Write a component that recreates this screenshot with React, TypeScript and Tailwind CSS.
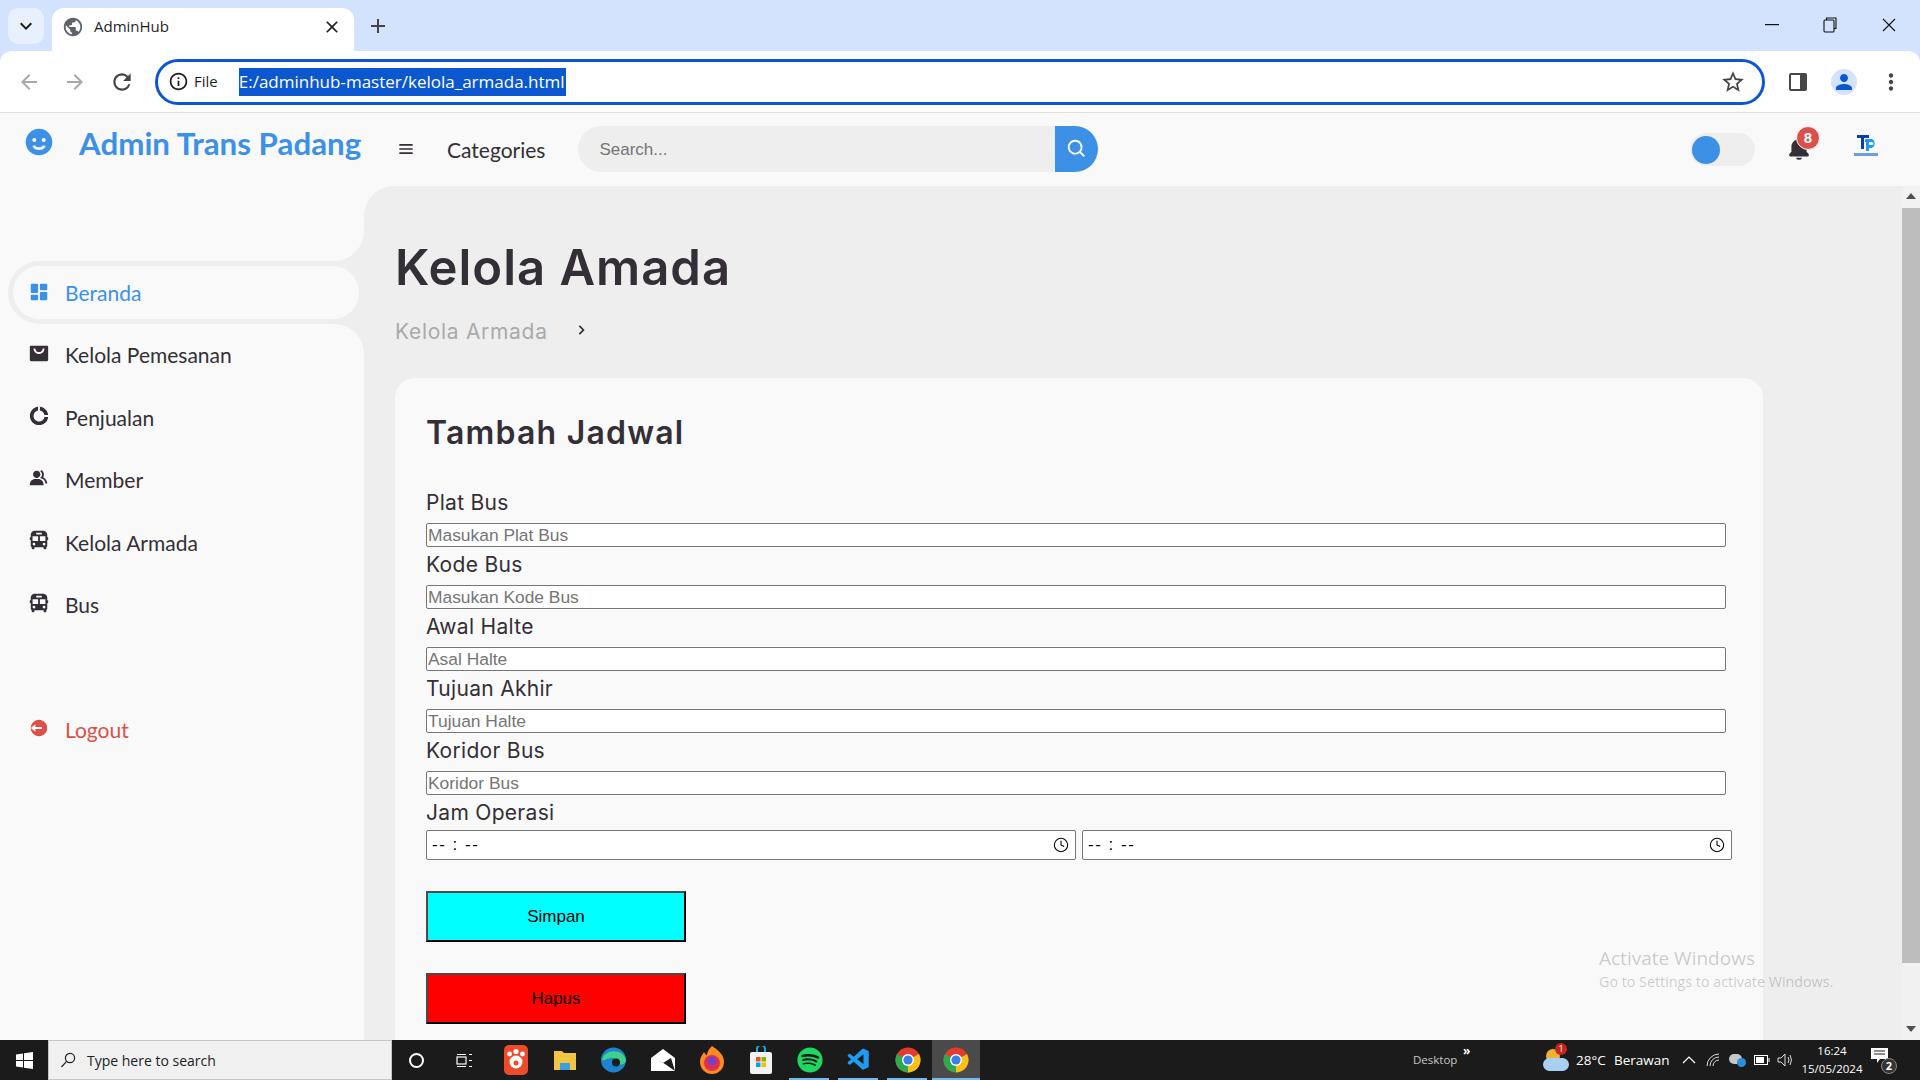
import { BiChevronRight, BiMenu, BiSearch, BiSolidBell, BiSolidBus, BiSolidDashboard, BiSolidDoughnutChart, BiSolidGroup, BiSolidLogOutCircle, BiSolidShoppingBagAlt, BiSolidSmile } from "react-icons/bi";
import { MdAdd, MdArrowBack, MdArrowForward, MdClose, MdInfoOutline, MdKeyboardArrowDown, MdMoreVert, MdPerson, MdPublic, MdRefresh, MdStarBorder } from "react-icons/md";
import { FaSpotify } from "react-icons/fa";
import { VscVscode } from "react-icons/vsc";
import { Clock } from "lucide-react";

const NAV_ITEMS = [
  { label: "Kelola Pemesanan", icon: BiSolidShoppingBagAlt },
  { label: "Penjualan", icon: BiSolidDoughnutChart },
  { label: "Member", icon: BiSolidGroup },
  { label: "Kelola Armada", icon: BiSolidBus },
  { label: "Bus", icon: BiSolidBus },
];

const FIELDS = [
  { label: "Plat Bus", placeholder: "Masukan Plat Bus" },
  { label: "Kode Bus", placeholder: "Masukan Kode Bus" },
  { label: "Awal Halte", placeholder: "Asal Halte" },
  { label: "Tujuan Akhir", placeholder: "Tujuan Halte" },
  { label: "Koridor Bus", placeholder: "Koridor Bus" },
];

function ChromeLogo() {
  return (
    <svg width="26" height="26" viewBox="0 0 26 26">
      <circle cx="13" cy="13" r="12.5" fill="#e33b2e" />
      <path d="M13 13 L24 7 A12.5 12.5 0 0 1 13 25.5 Z" fill="#fbc116" />
      <path d="M13 13 L13 25.5 A12.5 12.5 0 0 1 2 7 Z" fill="#2fa84f" />
      <circle cx="13" cy="13" r="6" fill="#fff" />
      <circle cx="13" cy="13" r="4.6" fill="#3a7fe6" />
    </svg>
  );
}

function BrowserBar() {
  return (
    <>
      <div className="h-[52px] bg-[#d3e3fd] flex items-start shrink-0 text-[#1f1f1f]">
        <div className="ml-2 mt-2 w-9 h-9 rounded-[10px] bg-[#e9f0fd] flex items-center justify-center">
          <MdKeyboardArrowDown size={24} />
        </div>
        <div className="ml-2 mt-2 w-[302px] h-11 bg-white rounded-t-xl flex items-center pl-[10px] pr-3 pb-[7px]">
          <MdPublic size={22} className="text-[#5f6368]" />
          <span className="ml-[10px] text-[15px] font-['Open_Sans',sans-serif] flex-1">AdminHub</span>
          <MdClose size={20} />
        </div>
        <div className="ml-3 mt-[14px] text-[#444]">
          <MdAdd size={24} />
        </div>
        <div className="ml-auto flex items-center h-[50px]">
          <svg width="14" height="2" viewBox="0 0 14 2"><rect width="14" height="1.2" fill="#111" /></svg>
          <svg className="ml-11" width="14" height="16" viewBox="0 0 14 16" fill="none" stroke="#111" strokeWidth="1.1">
            <rect x="1" y="3" width="10" height="12" rx="1" />
            <path d="M3.5 3 V1 H13 V11.5 H11" />
          </svg>
          <svg className="ml-[45px] mr-6" width="14" height="14" viewBox="0 0 14 14" stroke="#111" strokeWidth="1.1"><path d="M1 1 L13 13 M13 1 L1 13" /></svg>
        </div>
      </div>
      <div className="h-[62px] bg-white border-b border-[#e0e0e0] shrink-0 flex items-center rounded-t-xl -mt-px relative">
        <MdArrowBack size={24} className="ml-[17px] text-[#a8a8a8]" />
        <MdArrowForward size={24} className="ml-[22px] text-[#a8a8a8]" />
        <MdRefresh size={26} className="ml-[22px] text-[#444]" />
        <div className="ml-[20px] w-[1610px] h-[46px] border-[3px] border-[#0b57d0] rounded-full flex items-center pl-[10px] font-['Open_Sans',sans-serif]">
          <MdInfoOutline size={21} className="text-[#1f1f1f]" />
          <span className="ml-[5px] text-[15px] text-[#1f1f1f] font-medium">File</span>
          <span className="ml-[21px] h-7 w-[327px] bg-[#0b57d0] text-white text-[17px] leading-7 whitespace-nowrap">E:/adminhub-master/kelola_armada.html</span>
          <MdStarBorder size={26} className="ml-auto mr-[16px] text-[#444]" />
        </div>
        <svg className="ml-[23px]" width="20" height="20" viewBox="0 0 20 20">
          <rect x="1" y="1" width="18" height="18" rx="2" fill="#474747" />
          <rect x="3" y="3" width="9" height="14" fill="#fff" />
        </svg>
        <div className="ml-[23px] w-[26px] h-[26px] rounded-full bg-[#d3e3fd] flex items-center justify-center text-[#0b57d0]">
          <MdPerson size={24} />
        </div>
        <MdMoreVert size={26} className="ml-[21px] text-[#444]" />
      </div>
    </>
  );
}

function TopNav() {
  return (
    <div className="h-[73px] shrink-0 flex items-start bg-[#f9f9f9]">
      <BiSolidSmile size={32} className="ml-[23px] mt-[13px] text-[#3c91e6]" />
      <span className="ml-[24px] mt-[8px] w-[288px] font-['Lato',sans-serif] font-bold text-[31.3px] leading-[44px] text-[#3c91e6] whitespace-nowrap">Admin Trans Padang</span>
      <BiMenu size={20} className="ml-[29px] mt-[26px] text-[#342e37]" />
      <span className="ml-[31px] mt-[21px] font-['Lato',sans-serif] text-[21px] leading-[32px] text-[#342e37]">Categories</span>
      <div className="ml-[33px] mt-[13px] flex">
        <div className="w-[477px] h-[46px] bg-[#eeeeee] rounded-l-full flex items-center pl-[21px] pt-[1px] font-['Liberation_Sans',sans-serif] text-[17px] text-[#757575]">Search...</div>
        <div className="w-[43px] h-[46px] bg-[#3c91e6] rounded-r-full flex items-center justify-center text-white">
          <BiSearch size={22} />
        </div>
      </div>
      <div className="ml-auto mt-5 w-[65px] h-[33px] rounded-full bg-[#eeeeee] flex items-center pl-[2px]">
        <div className="w-7 h-7 rounded-full bg-[#3c91e6]" />
      </div>
      <div className="ml-[31px] mt-[23px] relative text-[#342e37]">
        <BiSolidBell size={26} />
        <span className="absolute -top-[10px] left-[10px] w-6 h-6 rounded-full bg-[#db504a] border border-[#f9f9f9] text-white text-[15px] font-bold font-['Liberation_Sans',sans-serif] flex items-center justify-center">8</span>
      </div>
      <svg className="ml-[42px] mr-[42px] mt-[21px]" width="24" height="24" viewBox="0 0 24 24">
        <rect x="3" y="1" width="12" height="3" fill="#0b3fa8" />
        <rect x="7" y="1" width="3" height="14" fill="#0b3fa8" />
        <path d="M11 5 H18 A5 5 0 0 1 18 14 H15 V17 H12 V8 H11 Z M15 8 V11 H18 A1.5 1.5 0 0 0 18 8 Z" fill="#1e9bf0" fillRule="evenodd" />
        <rect x="0" y="19" width="24" height="3" fill="#6f9fd8" />
      </svg>
    </div>
  );
}

function Sidebar() {
  return (
    <div className="w-[364px] shrink-0 flex flex-col bg-[#eeeeee] font-['Lato',sans-serif] text-[21px] text-[#342e37]">
      <div className="h-[75px] bg-[#f9f9f9] rounded-br-[30px]" />
      <div className="h-[63px] bg-[#f9f9f9] pl-2">
        <div className="h-full bg-[#eeeeee] rounded-l-full p-[5px]">
          <div className="h-full bg-[#f9f9f9] rounded-full flex items-center pl-[15px] text-[#3c91e6]">
            <BiSolidDashboard size={22} className="-mt-[2px]" />
            <span className="ml-[15px]">Beranda</span>
          </div>
        </div>
      </div>
      <div className="flex-1 bg-[#f9f9f9] rounded-tr-[30px]">
        {NAV_ITEMS.map((item) => (
          <div key={item.label} className="h-[62.4px] flex items-center pl-[28px]">
            <item.icon size={22} className="-mt-1" />
            <span className="ml-[15px]">{item.label}</span>
          </div>
        ))}
        <div className="mt-[63px] h-[62px] flex items-center pl-[28px] text-[#db504a]">
          <BiSolidLogOutCircle size={22} className="-mt-1" />
          <span className="ml-[15px]">Logout</span>
        </div>
      </div>
    </div>
  );
}

function TimeField() {
  return (
    <div className="w-[650px] h-[30px] bg-white border border-[#767676] rounded-[2px] flex items-center pl-[5px] pr-[6px] font-['Liberation_Sans',sans-serif] text-[17px] text-black">
      <span className="tracking-[1.5px] whitespace-pre">-- : --</span>
      <Clock size={16} strokeWidth={1.6} className="ml-auto" />
    </div>
  );
}

function Content() {
  return (
    <div className="flex-1 min-w-0 h-full flex overflow-hidden">
      <div className="flex-1 min-w-0 bg-[#eeeeee] rounded-tl-[30px] pl-[31px] overflow-hidden font-['Inter',sans-serif] text-[#342e37]">
        <h1 className="mt-[53px] text-[49px] leading-[58px] font-semibold tracking-[1px]">Kelola Amada</h1>
        <div className="mt-[21px] flex items-center h-7 text-[#aaaaaa] text-[21px] tracking-[0.7px]">
          <span className="w-[176px]">Kelola Armada</span>
          <BiChevronRight size={20} className="text-[#342e37] -mt-1" />
        </div>
        <div className="mt-[32px] w-[1368px] h-[700px] bg-[#f9f9f9] rounded-t-[20px] pl-[31px] pt-[32px]">
          <h2 className="text-[32px] leading-[46px] font-semibold tracking-[1.2px]">Tambah Jadwal</h2>
          <div className="mt-[29px]">
            {FIELDS.map((field) => (
              <div key={field.label} className="h-[62px]">
                <label className="block h-[38px] text-[21px] leading-[36px] tracking-[0.3px]">{field.label}</label>
                <input
                  placeholder={field.placeholder}
                  className="block w-[1300px] h-[24px] bg-white border border-[#767676] rounded-[2px] px-px font-['Liberation_Sans',sans-serif] text-[17.4px] leading-[22px] placeholder:text-[#757575] outline-none"
                />
              </div>
            ))}
          </div>
          <label className="block h-[35px] text-[21px] leading-[36px] tracking-[0.3px]">Jam Operasi</label>
          <div className="flex gap-[6px]">
            <TimeField />
            <TimeField />
          </div>
          <button className="block mt-[31px] w-[260px] h-[51px] bg-[#00ffff] border-2 border-t-[#4a4a4a] border-l-[#4a4a4a] border-r-black border-b-black font-['Liberation_Sans',sans-serif] text-[17px] text-black">Simpan</button>
          <button className="block mt-[31px] w-[260px] h-[51px] bg-[#ff0000] border-2 border-t-[#4a4a4a] border-l-[#4a4a4a] border-r-black border-b-black font-['Liberation_Sans',sans-serif] text-[17px] text-black">Hapus</button>
        </div>
      </div>
      <div className="w-[18px] shrink-0 bg-[#f1f1f1] flex flex-col items-center">
        <svg className="mt-[7px]" width="10" height="6" viewBox="0 0 10 6"><path d="M5 0 L10 6 H0 Z" fill="#505050" /></svg>
        <div className="mt-[9px] w-full h-[755px] bg-[#bdbdbd]" />
        <svg className="mt-[63px]" width="10" height="6" viewBox="0 0 10 6"><path d="M5 6 L10 0 H0 Z" fill="#505050" /></svg>
      </div>
    </div>
  );
}

function Taskbar() {
  return (
    <div className="h-10 shrink-0 bg-[#1b1b1b] flex items-center text-white font-['Open_Sans',sans-serif]">
      <div className="flex items-center shrink-0">
        <div className="w-12 flex justify-center">
          <svg width="17" height="17" viewBox="0 0 17 17" fill="#fff">
            <path d="M0 2.4 L7 1.4 V8 H0 Z M8 1.2 L17 0 V8 H8 Z M0 9 H7 V15.6 L0 14.6 Z M8 9 H17 V17 L8 15.8 Z" />
          </svg>
        </div>
        <div className="w-[344px] h-10 bg-[#f0f0f0] border border-[#c4c4c4] flex items-center pl-[11px] text-[#222] text-[14px]">
          <svg width="16" height="16" viewBox="0 0 16 16" fill="none" stroke="#222" strokeWidth="1.2">
            <circle cx="10" cy="6" r="4.6" />
            <path d="M6.6 9.4 L1.5 15" />
          </svg>
          <span className="ml-[11px]">Type here to search</span>
        </div>
        <div className="w-12 flex justify-center">
          <div className="w-[15px] h-[15px] rounded-full border-2 border-white" />
        </div>
        <div className="w-12 flex justify-center">
          <svg width="17" height="15" viewBox="0 0 17 15" fill="none" stroke="#fff" strokeWidth="1.2">
            <rect x="1" y="4" width="9" height="7" />
            <path d="M1 1.5 H10 M1 13.5 H10 M13 1.5 H16 M13 7.5 H16 M13 13.5 H16" />
          </svg>
        </div>
        <div className="ml-[3px] w-[49px] flex justify-center">
          <svg width="24" height="30" viewBox="0 0 24 30">
            <rect width="24" height="30" rx="5" fill="#ee4b2b" />
            <circle cx="12" cy="17" r="6.5" fill="#fff" />
            <circle cx="5.5" cy="9" r="2.4" fill="#fff" />
            <circle cx="12" cy="6.5" r="2.6" fill="#fff" />
            <circle cx="18.5" cy="9" r="2.4" fill="#fff" />
            <circle cx="12" cy="18" r="2.5" fill="#ee4b2b" />
          </svg>
        </div>
        <div className="w-[49px] flex justify-center">
          <svg width="22" height="22" viewBox="0 0 22 22">
            <path d="M0 2 H8 L10 4 H22 V21 H0 Z" fill="#f4c542" />
            <rect x="6" y="14" width="10" height="7" fill="#3e9fe0" />
          </svg>
        </div>
        <div className="w-[49px] flex justify-center">
          <svg width="25" height="26" viewBox="0 0 25 26">
            <circle cx="12.5" cy="13" r="12.5" fill="#1f84d0" />
            <path d="M1 13 C3 2 22 1 25 13 C25 17 21 18 15 18 C17 13 13 10 9 11 C5 12 3 14 1 13 Z" fill="#3fd08a" />
            <circle cx="15" cy="15.5" r="4" fill="#1b1b1b" />
          </svg>
        </div>
        <div className="w-[49px] flex justify-center">
          <svg width="24" height="22" viewBox="0 0 24 22">
            <path d="M0 9 L12 0 L24 9 V22 H0 Z" fill="#fff" />
            <path d="M4 9 L12 14 L20 9 L24 22 L14 15 Z" fill="#1b1b1b" />
          </svg>
        </div>
        <div className="w-[49px] flex justify-center">
          <svg width="24" height="28" viewBox="0 0 24 28">
            <path d="M12 0 C20 5 24 10 24 16 A12 12 0 0 1 0 16 C0 11 3 8 4 6 C5 8 6 9 7 9 C7 6 9 3 12 0 Z" fill="#ff8a1f" />
            <circle cx="12" cy="17" r="8" fill="#e0304f" />
            <circle cx="12" cy="15" r="4.5" fill="#7a3fc4" />
          </svg>
        </div>
        <div className="w-[49px] flex justify-center">
          <svg width="22" height="28" viewBox="0 0 22 28">
            <path d="M7 7 V3 A4 4 0 0 1 15 3 V7" fill="none" stroke="#2ba7e0" strokeWidth="2" />
            <rect y="6" width="22" height="22" rx="2" fill="#f2f2f2" />
            <rect x="6" y="11" width="4.5" height="4.5" fill="#f25022" />
            <rect x="11.5" y="11" width="4.5" height="4.5" fill="#7fba00" />
            <rect x="6" y="16.5" width="4.5" height="4.5" fill="#00a4ef" />
            <rect x="11.5" y="16.5" width="4.5" height="4.5" fill="#ffb900" />
          </svg>
        </div>
        <div className="w-[49px] h-10 flex justify-center items-center relative">
          <FaSpotify size={26} className="text-[#1ed760]" />
          <span className="absolute bottom-0 left-[4px] right-[5px] h-[2px] bg-[#76b9ed]" />
        </div>
        <div className="w-[49px] h-10 flex justify-center items-center relative">
          <VscVscode size={26} className="text-[#1f9cf0]" />
          <span className="absolute bottom-0 left-[4px] right-[5px] h-[2px] bg-[#76b9ed]" />
        </div>
        <div className="w-[49px] h-10 flex justify-center items-center relative">
          <ChromeLogo />
          <span className="absolute bottom-0 left-[4px] right-[5px] h-[2px] bg-[#76b9ed]" />
        </div>
        <div className="w-[48px] h-10 flex justify-center items-center relative bg-[#4a4a4a]">
          <ChromeLogo />
          <span className="absolute bottom-0 left-0 right-0 h-[2px] bg-[#76b9ed]" />
        </div>
      </div>
      <div className="ml-auto mr-[25px] flex items-center shrink-0">
        <span className="w-[50px] text-[11.5px] text-[#c8c8c8]">Desktop</span>
        <span className="w-[10px] -mt-[18px] text-[12px] font-bold leading-none">»</span>
        <div className="ml-[70px] relative w-[26px] h-[22px]">
          <div className="absolute left-[3px] top-0 w-[14px] h-[14px] rounded-full bg-[#f2b134]" />
          <div className="absolute left-0 bottom-0 w-[26px] h-[13px] rounded-full bg-[#a9d0f2]" />
          <span className="absolute -top-[6px] left-[12px] w-3 h-3 rounded-full bg-[#c4261d] text-[9px] leading-3 text-center">1</span>
        </div>
        <span className="ml-[7px] w-[38px] text-[13.5px] whitespace-nowrap">28°C</span>
        <span className="w-[60px] text-[13.5px] whitespace-nowrap">Berawan</span>
        <svg className="ml-[8px]" width="14" height="8" viewBox="0 0 14 8" fill="none" stroke="#fff" strokeWidth="1.2"><path d="M1 7 L7 1 L13 7" /></svg>
        <svg className="ml-[10px]" width="14" height="14" viewBox="0 0 14 14" fill="none" stroke="#ddd" strokeWidth="1">
          <path d="M1 13 A12 12 0 0 1 13 1 M4 13 A9 9 0 0 1 13 4 M7 13 A6 6 0 0 1 13 7" />
        </svg>
        <div className="ml-[9px] relative w-[17px] h-[14px]">
          <div className="absolute left-0 top-[1px] w-[13px] h-[10px] rounded-full bg-[#c8c8c8]" />
          <div className="absolute right-0 bottom-0 w-[9px] h-[9px] rounded-full bg-[#2a8fe0]" />
        </div>
        <svg className="ml-[8px]" width="16" height="10" viewBox="0 0 16 10" fill="none" stroke="#fff" strokeWidth="1">
          <rect x="0.5" y="0.5" width="13" height="9" />
          <rect x="2" y="2" width="8" height="6" fill="#fff" stroke="none" />
          <path d="M15 3 V7" />
        </svg>
        <svg className="ml-[7px]" width="16" height="14" viewBox="0 0 16 14" fill="none" stroke="#ddd" strokeWidth="1">
          <path d="M1 5 H4 L8 1 V13 L4 9 H1 Z M11 4 Q13 7 11 10 M13 2 Q16 7 13 12" />
        </svg>
        <div className="ml-[3px] w-[72px] flex flex-col items-center text-[11.5px] leading-[18px]">
          <span>16:24</span>
          <span>15/05/2024</span>
        </div>
        <div className="ml-[3px] relative w-[24px] h-[24px]">
          <svg width="17" height="15" viewBox="0 0 17 15">
            <path d="M0 0 H17 V11 H9 L6 15 V11 H0 Z" fill="#fff" />
            <path d="M3 3 H14 M3 6 H14" stroke="#1b1b1b" />
          </svg>
          <span className="absolute right-[-2px] bottom-[-2px] w-4 h-4 rounded-full bg-[#333] border border-[#888] text-[11px] font-bold flex items-center justify-center">2</span>
        </div>
      </div>
    </div>
  );
}

export default function App() {
  return (
    <div className="w-[1920px] h-[1080px] flex flex-col overflow-hidden relative bg-[#d3e3fd]">
      <BrowserBar />
      <div className="flex-1 min-h-0 flex flex-col bg-[#f9f9f9]">
        <TopNav />
        <div className="flex-1 min-h-0 flex">
          <Sidebar />
          <Content />
        </div>
      </div>
      <Taskbar />
      <div className="absolute left-[1599px] top-[945px] font-['Open_Sans',sans-serif] text-black/20 pointer-events-none">
        <div className="text-[19px] leading-[26px]">Activate Windows</div>
        <div className="text-[14.3px] leading-[20px] mt-[1px]">Go to Settings to activate Windows.</div>
      </div>
    </div>
  );
}
